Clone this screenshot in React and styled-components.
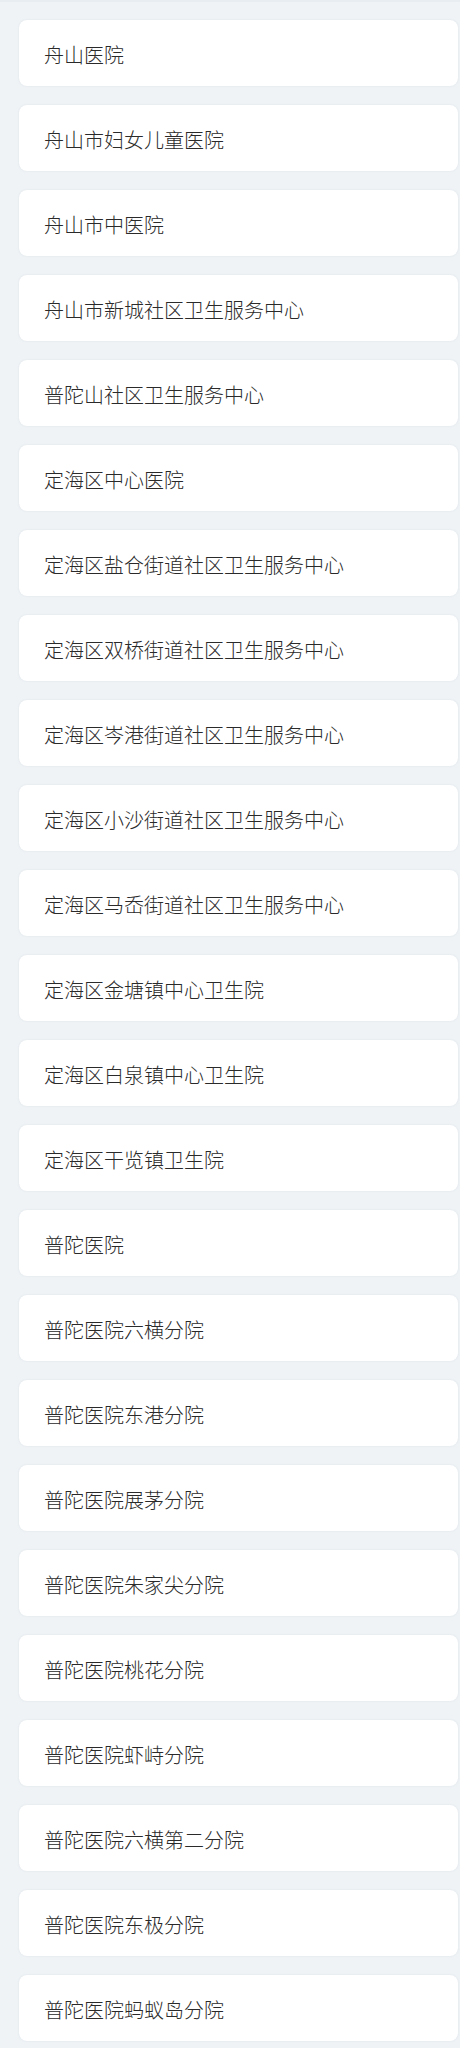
import React from 'react';
import styled, { createGlobalStyle } from 'styled-components';

const GlobalStyle = createGlobalStyle`
  body {
    margin: 0;
    background: #eff3f6;
    font-family: "Noto Sans CJK SC", "Noto Sans", sans-serif;
  }
`;

const Page = styled.div`
  min-height: 2048px;
  background: #eff3f6;
  border-top: 2px solid #e8edf1;
  padding: 18px 2px 0 19px;
  box-sizing: border-box;
`;

const List = styled.ul`
  list-style: none;
  margin: 0;
  padding: 0;
  display: flex;
  flex-direction: column;
  gap: 19px;
`;

const Item = styled.li`
  height: 66px;
  box-sizing: border-box;
  display: flex;
  align-items: center;
  padding: 3px 0 0 25px;
  background: #fff;
  border-radius: 8px;
  box-shadow: 0 0 2px rgba(180, 190, 200, 0.35);
  font-size: 20px;
  font-weight: 300;
  color: #2a2a2a;
`;

const hospitals = [
  '舟山医院',
  '舟山市妇女儿童医院',
  '舟山市中医院',
  '舟山市新城社区卫生服务中心',
  '普陀山社区卫生服务中心',
  '定海区中心医院',
  '定海区盐仓街道社区卫生服务中心',
  '定海区双桥街道社区卫生服务中心',
  '定海区岑港街道社区卫生服务中心',
  '定海区小沙街道社区卫生服务中心',
  '定海区马岙街道社区卫生服务中心',
  '定海区金塘镇中心卫生院',
  '定海区白泉镇中心卫生院',
  '定海区干览镇卫生院',
  '普陀医院',
  '普陀医院六横分院',
  '普陀医院东港分院',
  '普陀医院展茅分院',
  '普陀医院朱家尖分院',
  '普陀医院桃花分院',
  '普陀医院虾峙分院',
  '普陀医院六横第二分院',
  '普陀医院东极分院',
  '普陀医院蚂蚁岛分院',
];

const App = () => {
  return (
    <>
      <GlobalStyle />
      <Page>
        <List>
          {hospitals.map((name) => (
            <Item key={name}>{name}</Item>
          ))}
        </List>
      </Page>
    </>
  );
};

export default App;
